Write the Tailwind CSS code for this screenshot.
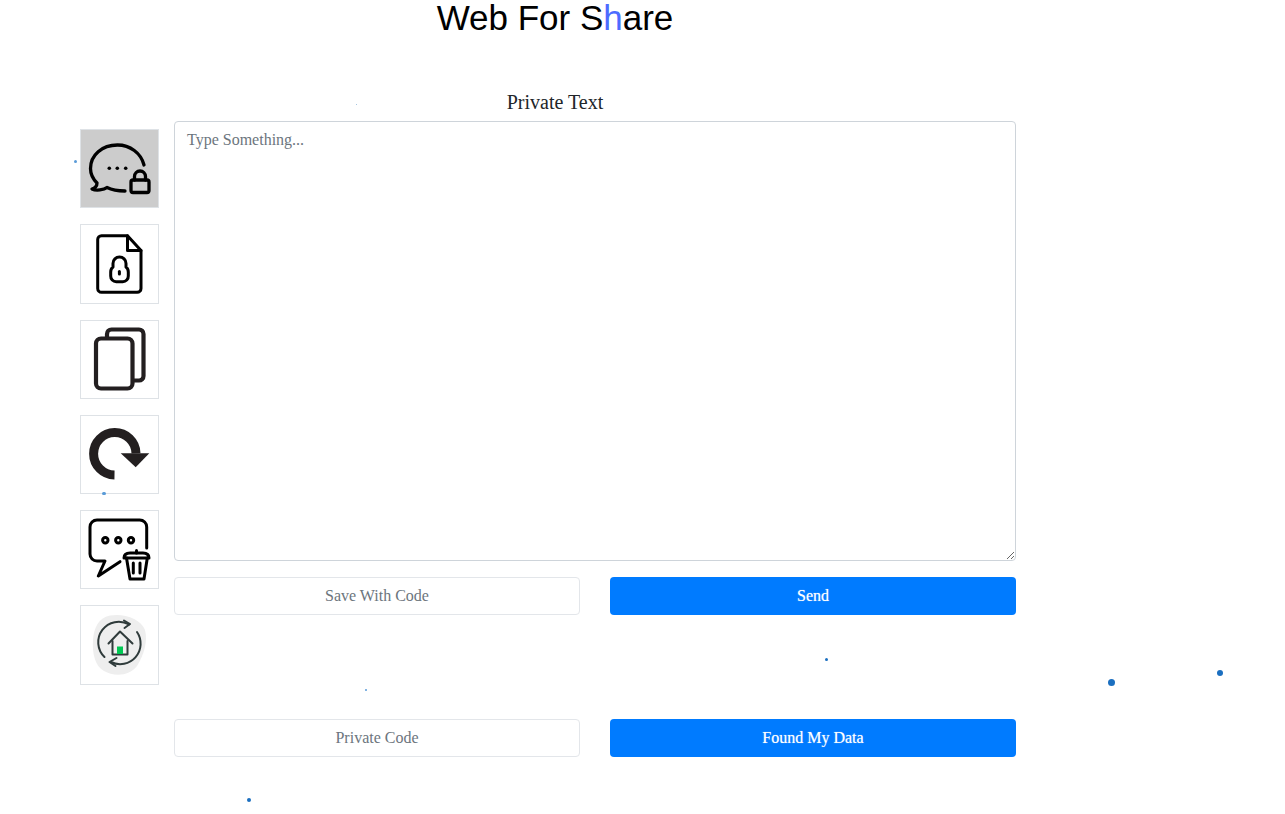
<!DOCTYPE html>
<html lang="en">
<head>
  <meta charset="UTF-8">
  <title>Web For Share</title>
  <script src="https://cdn.jsdelivr.net/npm/@tailwindcss/browser@4"></script>
</head>
<body class="relative bg-white h-[814px] overflow-hidden font-['Liberation_Serif',serif] text-[16px] text-[#212529]">

  <!-- floating particles -->
  <div class="absolute left-[74px] top-[160px] w-[3px] h-[3px] rounded-full bg-[#5a9bd8]"></div>
  <div class="absolute left-[356px] top-[104px] w-[1px] h-[1px] rounded-full bg-[#8ab4d8]"></div>
  <div class="absolute left-[102px] top-[492px] w-[4px] h-[3px] rounded-full bg-[#5a9bd8]"></div>
  <div class="absolute left-[825px] top-[658px] w-[3px] h-[3px] rounded-full bg-[#1b6fc0]"></div>
  <div class="absolute left-[365px] top-[689px] w-[2px] h-[2px] rounded-full bg-[#5a9bd8]"></div>
  <div class="absolute left-[1108px] top-[679px] w-[7px] h-[7px] rounded-full bg-[#1b6fc0]"></div>
  <div class="absolute left-[1217px] top-[670px] w-[6px] h-[6px] rounded-full bg-[#1b6fc0]"></div>
  <div class="absolute left-[247px] top-[798px] w-[4px] h-[4px] rounded-full bg-[#1b6fc0]"></div>

  <div class="w-[1110px]">
    <h1 class="text-center text-[35px] leading-[36px] text-black font-['Liberation_Sans',sans-serif]">Web For S<span class="text-[#4d6bff]">h</span>are</h1>

    <div class="flex mt-[55px]">
      <!-- side buttons -->
      <div class="w-[79px] ml-[80px] pt-[38.2px] flex flex-col gap-[16px]">
        <button class="block w-[79px] h-[79.2px] border border-[#dee2e6] bg-[#cccccc]">
          <svg class="block" width="77" height="77" viewBox="1 1 77 77" fill="none" stroke="#000" stroke-width="3.300" stroke-linecap="round" stroke-linejoin="round">
            <path d="M64 36C61 24 50 16 37.500 16C22 16 10.500 26 10.500 39.500C10.500 45 13 50 17 54C17 57 15 59 12 60C16 62 24 61 27 58.500C32 61 38 62 45 62"/>
            <circle cx="29.300" cy="39.300" r="1.800" fill="#000" stroke="none"/>
            <circle cx="37.300" cy="39.300" r="1.800" fill="#000" stroke="none"/>
            <circle cx="45.700" cy="39.300" r="1.800" fill="#000" stroke="none"/>
            <rect x="51" y="51" width="18" height="12.500" rx="2"/>
            <path d="M54.500 51V47.500A5.300 5.300 0 0 1 65.500 47.500V51"/>
          </svg>
        </button>
        <button class="block w-[79px] h-[79.2px] border border-[#dee2e6] bg-white">
          <svg class="block" width="77" height="77" viewBox="1 1 77 77" fill="none" stroke="#000" stroke-width="3" stroke-linecap="round" stroke-linejoin="round">
            <path d="M47.500 11.700H21.500A3.800 3.800 0 0 0 17.700 15.500V64.500A3.800 3.800 0 0 0 21.500 68.300H57.200A3.800 3.800 0 0 0 61 64.500V26.500Z"/>
            <path d="M47.500 11.700V26.500H61"/>
            <path d="M33 43V39.500A6.500 6.500 0 0 1 46 39.500V43C48 44.500 48.300 46 48.300 48V52A5.500 5.500 0 0 1 42.800 57.700H36.200A5.500 5.500 0 0 1 30.700 52V48C30.700 46 31 44.500 33 43Z"/>
            <path d="M39.400 47.500V50"/>
          </svg>
        </button>
        <button class="block w-[79px] h-[79.2px] border border-[#dee2e6] bg-white">
          <svg class="block" width="77" height="77" viewBox="1 1 77 77" fill="none" stroke="#231f20" stroke-width="4.200" stroke-linecap="round" stroke-linejoin="round">
            <rect x="16" y="18.500" width="36.500" height="50" rx="5"/>
            <path d="M27 18V14A4.500 4.500 0 0 1 31.500 9.500H59A4.500 4.500 0 0 1 63.500 14V56A4.500 4.500 0 0 1 59 60.500H53"/>
          </svg>
        </button>
        <button class="block w-[79px] h-[79.2px] border border-[#dee2e6] bg-white">
          <svg class="block" width="77" height="77" viewBox="1 1 77 77" fill="none">
            <path d="M34.500 60A21.200 21.200 0 1 1 56 38.300" stroke="#231f20" stroke-width="9"/>
            <path d="M40.700 38.300H69.300L55.700 52.300Z" fill="#231f20"/>
          </svg>
        </button>
        <button class="block w-[79px] h-[79.2px] border border-[#dee2e6] bg-white">
          <svg class="block" width="77" height="77" viewBox="1 1 77 77" fill="none" stroke="#000" stroke-width="3" stroke-linecap="round" stroke-linejoin="round">
            <path d="M66.700 38V17A7 7 0 0 0 59.700 10H17A7 7 0 0 0 10 17V44A7 7 0 0 0 17 51H25L18.300 66L40 51.700"/>
            <circle cx="25.300" cy="30.300" r="2.700"/>
            <circle cx="38.300" cy="30.300" r="2.700"/>
            <circle cx="51" cy="30.300" r="2.700"/>
            <path d="M44 48C44 44 47 43 50 43H63C66 43 69 44 69 48Z"/>
            <path d="M56.500 43V40.500"/>
            <path d="M46.500 48L50 69H64L67.300 48"/>
            <path d="M53.300 53V63M60 53V63"/>
          </svg>
        </button>
        <button class="block w-[79px] h-[80px] border border-[#dee2e6] bg-white">
          <svg class="block" width="77" height="78" viewBox="1 1 77 78" fill="none" stroke="#2f3b3b" stroke-width="2" stroke-linecap="round" stroke-linejoin="round">
            <path d="M30 10.500C44 8 61 14 65 25C68 36 64 50 57 61C50 71 34 72 24 66C15 61 12 48 13 35C14 23 18 13 30 10.500Z" fill="#eeeeee" stroke="none"/>
            <path d="M24.500 52A20.500 20.500 0 0 1 49 19.500"/>
            <path d="M44 15.500L50 19L44.500 23"/>
            <path d="M57 27A20.500 20.500 0 0 1 31 57"/>
            <path d="M36.500 53L29.500 57L35.500 61"/>
            <path d="M28.500 38.500L40 26.500L52.500 38.500"/>
            <path d="M32.500 36V49.500H47.500V36"/>
            <rect x="37" y="41.500" width="6" height="7.500" fill="#00c853" stroke="none"/>
          </svg>
        </button>
      </div>

      <!-- form -->
      <div class="w-[842px] ml-[15px]">
        <p class="text-center text-[20px] leading-[22px] mr-[80px] text-[#212529]">Private Text</p>
        <textarea placeholder="Type Something..." class="block mt-[8px] w-full h-[440px] px-3 py-[6px] text-[16px] leading-6 border border-[#ced4da] rounded-[4px] bg-white placeholder:text-[#6c757d]"></textarea>

        <div class="grid grid-cols-2 gap-[30px] mt-4">
          <input placeholder="Save With Code" class="h-[38px] px-3 text-center border border-[#e3e6ea] rounded-[4px] placeholder:text-[#6c757d]">
          <button class="h-[38px] rounded-[4px] bg-[#007bff] text-white [text-shadow:0_0_1px_rgba(255,255,255,0.6)]">Send</button>
        </div>

        <div class="grid grid-cols-2 gap-[30px] mt-[104px]">
          <input placeholder="Private Code" class="h-[38px] px-3 text-center border border-[#e3e6ea] rounded-[4px] placeholder:text-[#6c757d]">
          <button class="h-[38px] rounded-[4px] bg-[#007bff] text-white [text-shadow:0_0_1px_rgba(255,255,255,0.6)]">Found My Data</button>
        </div>
      </div>
    </div>
  </div>

</body>
</html>
